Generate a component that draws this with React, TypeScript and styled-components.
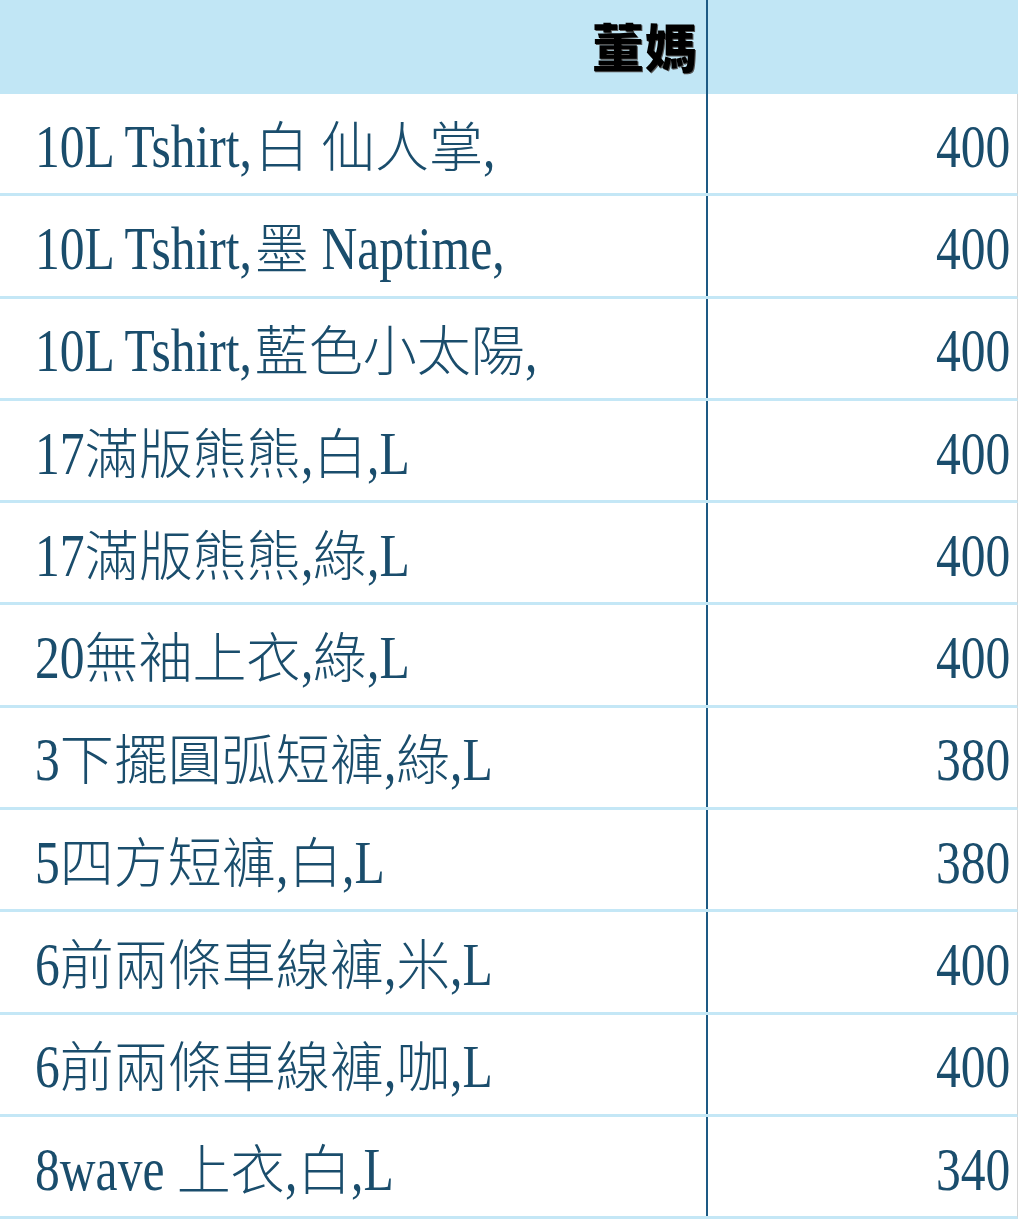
import styled, { createGlobalStyle } from "styled-components";

const LATIN_SIZE = 62;
const SQUEEZE = 0.8;
const LATIN_FONT = `${LATIN_SIZE}px "Liberation Serif"`;

const GlobalStyle = createGlobalStyle`
  html, body {
    margin: 0;
    padding: 0;
    background: #ffffff;
  }
  body {
    font-family: "Liberation Serif", "Noto Sans CJK TC", serif;
  }
`;

const Sheet = styled.div`
  width: 1018px;
  display: flex;
  flex-direction: column;
`;

const HeaderRow = styled.div`
  display: flex;
  height: 94px;
  background: #c1e6f5;
`;

const Row = styled.div`
  display: flex;
  height: 102.3px;
  box-sizing: border-box;
  border-bottom: 3px solid #c4e7f6;
  border-right: 1px solid #d4d4d4;
`;

const NameCell = styled.div<{ $head?: boolean }>`
  width: 708px;
  box-sizing: border-box;
  border-right: 2px solid #1d5a84;
  display: flex;
  align-items: center;
  justify-content: ${(p) => (p.$head ? "flex-end" : "flex-start")};
  padding: ${(p) => (p.$head ? "0 8px 4px 0" : "4px 0 0 35px")};
  white-space: nowrap;
  overflow: hidden;
`;

const PriceCell = styled.div`
  flex: 1;
  display: flex;
  align-items: center;
  justify-content: flex-end;
  padding: 4px 7px 0 0;
`;

const HeadText = styled.span`
  font-family: "Noto Sans CJK TC", sans-serif;
  font-weight: 900;
  font-size: 52px;
  color: #000;
  letter-spacing: 1px;
  text-shadow: 1px 1px 0 #555;
`;

const Line = styled.span`
  display: inline-flex;
  align-items: baseline;
  color: #1a4d6c;
`;

const Cjk = styled.span`
  font-family: "Noto Sans CJK TC", sans-serif;
  font-weight: 300;
  font-size: 54px;
  line-height: 1;
`;

const LatinBox = styled.span`
  display: inline-block;
  line-height: 1;
`;

const Latin = styled.span`
  display: inline-block;
  font-family: "Liberation Serif", serif;
  font-size: ${LATIN_SIZE}px;
  line-height: 1;
  white-space: pre;
  transform: scaleX(${SQUEEZE});
  transform-origin: left;
`;

let ctx: CanvasRenderingContext2D | null = null;
const measure = (text: string) => {
  if (!ctx) ctx = document.createElement("canvas").getContext("2d");
  if (!ctx) return text.length * LATIN_SIZE * 0.5;
  ctx.font = LATIN_FONT;
  return ctx.measureText(text).width;
};

const Narrow = ({ text }: { text: string }) => (
  <LatinBox style={{ width: measure(text) * SQUEEZE }}>
    <Latin>{text}</Latin>
  </LatinBox>
);

const Mixed = ({ text }: { text: string }) => {
  const parts = text.split(/([\x00-\x7F]+)/).filter(Boolean);
  return (
    <Line>
      {parts.map((p, i) =>
        /^[\x00-\x7F]+$/.test(p) ? <Narrow key={i} text={p} /> : <Cjk key={i}>{p}</Cjk>
      )}
    </Line>
  );
};

const items = [
  { name: "10L Tshirt,白 仙人掌,", price: 400 },
  { name: "10L Tshirt,墨 Naptime,", price: 400 },
  { name: "10L Tshirt,藍色小太陽,", price: 400 },
  { name: "17滿版熊熊,白,L", price: 400 },
  { name: "17滿版熊熊,綠,L", price: 400 },
  { name: "20無袖上衣,綠,L", price: 400 },
  { name: "3下擺圓弧短褲,綠,L", price: 380 },
  { name: "5四方短褲,白,L", price: 380 },
  { name: "6前兩條車線褲,米,L", price: 400 },
  { name: "6前兩條車線褲,咖,L", price: 400 },
  { name: "8wave 上衣,白,L", price: 340 },
];

export default function App() {
  return (
    <>
      <GlobalStyle />
      <Sheet>
        <HeaderRow>
          <NameCell $head>
            <HeadText>董媽</HeadText>
          </NameCell>
          <PriceCell />
        </HeaderRow>
        {items.map((it, i) => (
          <Row key={i}>
            <NameCell>
              <Mixed text={it.name} />
            </NameCell>
            <PriceCell>
              <Line>
                <Narrow text={String(it.price)} />
              </Line>
            </PriceCell>
          </Row>
        ))}
      </Sheet>
    </>
  );
}
